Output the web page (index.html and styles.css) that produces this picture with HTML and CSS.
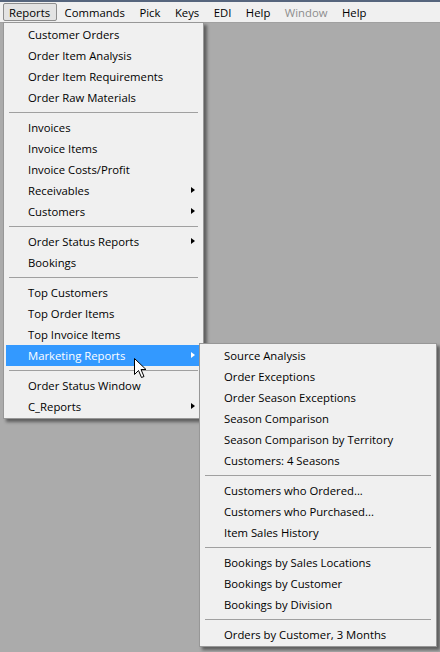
FILE: index.html
```html
<!DOCTYPE html>
<html>
<head>
<meta charset="utf-8">
<link rel="stylesheet" href="styles.css">
</head>
<body>
<div class="menubar">
  <div class="mb-item active">Reports</div>
  <div class="mb-item">Commands</div>
  <div class="mb-item">Pick</div>
  <div class="mb-item">Keys</div>
  <div class="mb-item">EDI</div>
  <div class="mb-item">Help</div>
  <div class="mb-item disabled">Window</div>
  <div class="mb-item">Help</div>
</div>

<div class="menu main-menu">
  <div class="item">Customer Orders</div>
  <div class="item">Order Item Analysis</div>
  <div class="item">Order Item Requirements</div>
  <div class="item">Order Raw Materials</div>
  <div class="sep"></div>
  <div class="item">Invoices</div>
  <div class="item">Invoice Items</div>
  <div class="item">Invoice Costs/Profit</div>
  <div class="item sub">Receivables<span class="arrow"></span></div>
  <div class="item sub">Customers<span class="arrow"></span></div>
  <div class="sep"></div>
  <div class="item sub">Order Status Reports<span class="arrow"></span></div>
  <div class="item">Bookings</div>
  <div class="sep"></div>
  <div class="item">Top Customers</div>
  <div class="item">Top Order Items</div>
  <div class="item">Top Invoice Items</div>
  <div class="item sub hl">Marketing Reports<span class="arrow"></span></div>
  <div class="sep"></div>
  <div class="item">Order Status Window</div>
  <div class="item sub">C_Reports<span class="arrow"></span></div>
</div>

<div class="menu sub-menu">
  <div class="item">Source Analysis</div>
  <div class="item">Order Exceptions</div>
  <div class="item">Order Season Exceptions</div>
  <div class="item">Season Comparison</div>
  <div class="item">Season Comparison by Territory</div>
  <div class="item">Customers: 4 Seasons</div>
  <div class="sep"></div>
  <div class="item">Customers who Ordered...</div>
  <div class="item">Customers who Purchased...</div>
  <div class="item">Item Sales History</div>
  <div class="sep"></div>
  <div class="item">Bookings by Sales Locations</div>
  <div class="item">Bookings by Customer</div>
  <div class="item">Bookings by Division</div>
  <div class="sep"></div>
  <div class="item">Orders by Customer, 3 Months</div>
</div>

<svg class="cursor" width="14" height="21" viewBox="0 0 14 21">
  <path d="M0.5 0.5 L0.5 16.5 L4.5 12.5 L7.5 19.5 L10 18.5 L7 11.5 L12 11.5 Z" fill="#fff" stroke="#000" stroke-width="1" stroke-linejoin="miter"/>
</svg>
</body>
</html>
```

FILE: styles.css
```css
html, body {
  margin: 0;
  padding: 0;
}
body {
  width: 440px;
  height: 652px;
  background: #ababab;
  font-family: "Open Sans", "DejaVu Sans", sans-serif;
  font-size: 11.3px;
  color: #000;
  overflow: hidden;
  position: relative;
}
.menubar {
  height: 20px;
  border-top: 2px solid #56657d;
  border-bottom: 1px solid #a0a0a0;
  background: #f0f0f0;
  display: flex;
  align-items: stretch;
  padding-left: 3px;
  box-sizing: content-box;
}
.mb-item {
  display: flex;
  align-items: center;
  padding: 1px 6px 0 5px;
  border: 1px solid transparent;
  margin-top: 1px;
  margin-bottom: 1px;
  line-height: 16px;
}
.mb-item + .mb-item {
  margin-left: 1.5px;
}
.mb-item.active {
  background: #e3e3e3;
  border-color: #8e8e8e;
  border-radius: 2px;
}
.mb-item.disabled {
  color: #8d8d8d;
}
.menu {
  position: absolute;
  background: #f0f0f0;
  border: 1px solid #979797;
  padding: 1px 3px 1px 2px;
  box-shadow: 3px 3px 3px rgba(0, 0, 0, 0.45);
  display: flex;
  flex-direction: column;
}
.main-menu {
  left: 3px;
  top: 22px;
  width: 194px;
}
.sub-menu {
  left: 199px;
  top: 343px;
  width: 231px;
}
.item {
  height: 21px;
  line-height: 21px;
  padding-left: 22px;
  position: relative;
  white-space: nowrap;
}
.item.hl {
  background: #3399ff;
  color: #fff;
}
.arrow {
  position: absolute;
  right: 5px;
  top: 7px;
  width: 0;
  height: 0;
  border-top: 3.5px solid transparent;
  border-bottom: 3.5px solid transparent;
  border-left: 4px solid #000;
}
.hl .arrow {
  border-left-color: #fff;
}
.sep {
  height: 1px;
  margin: 4px 2px 4px 3px;
  background: #a0a0a0;
}
.cursor {
  position: absolute;
  left: 134px;
  top: 358px;
}
```
